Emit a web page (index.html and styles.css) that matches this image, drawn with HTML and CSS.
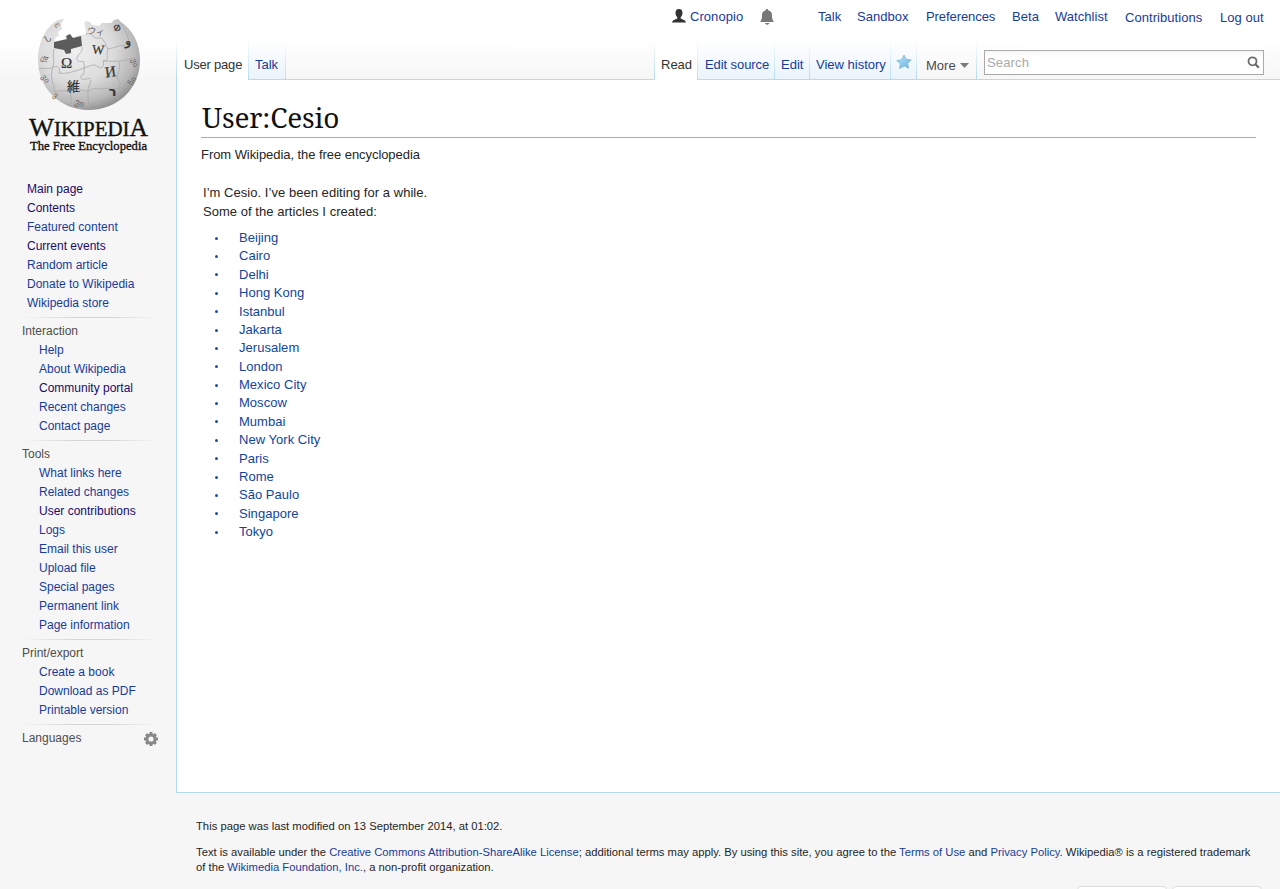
FILE: index.html
```html
<!DOCTYPE html>
<html lang="en">
<head>
<meta charset="utf-8">
<title>User:Cesio - Wikipedia, the free encyclopedia</title>
<link rel="stylesheet" href="styles.css">
</head>
<body>
<div class="page">
  <aside class="sidebar">
    <a class="logo">
      <svg width="176" height="170" viewBox="0 0 176 170">
        <defs>
          <radialGradient id="globe" cx="0.38" cy="0.34" r="0.72">
            <stop offset="0" stop-color="#f0f0f0"/>
            <stop offset="0.5" stop-color="#dcdcdc"/>
            <stop offset="0.8" stop-color="#b8b8b8"/>
            <stop offset="1" stop-color="#858585"/>
          </radialGradient>
        </defs>
        <path fill="url(#globe)" d="M64 19 L61 24 L62 29 L58 32 L59 36 L56 37 L54 42 L66 40 L65 37 L69 34 L71 38 L81 35 L86 34 L85 25 L84 24 L86 21 L90 22 L92 25 L99 26 L102 23 L111 23 L114 20 L118 19 L121 22 C133 30 140 44 140 60 C140 89 117 110 89 110 C60 110 38 88 38 60 C38 40 47 26 58 20 Z"/>
        <path fill="#5c5c5c" d="M54 42 L67 39 L66 36 L70 34 L73 38 L81 36 L82 46 L71 49 L71 53 L66 54 L64 50 L54 48 Z"/>
        <g class="seams">
          <path d="M82 47 C83 52 79 53 78 56 C75 59 78 63 83 61 C85 64 84 69 84 74 C79 75 80 81 86 79 C91 77 92 80 89 86 C87 91 88 98 89 109"/>
          <path d="M54 49 C52 56 55 61 53 67 C58 65 61 69 59 73 C64 74 71 73 84 68 C91 66 94 63 98 67 C102 70 105 65 103 61 C112 61 120 63 137 57"/>
          <path d="M39 69 C47 67 49 70 53 67 M53 67 C49 78 54 84 55 92 C61 89 67 93 72 89 C80 88 84 93 91 90 C97 86 100 91 106 88 C116 91 122 87 132 83"/>
          <path d="M86 34 C94 32 93 40 98 38 C104 36 105 45 108 49 C105 56 111 60 103 61 M108 49 C116 48 121 43 127 47 C131 44 128 34 121 23 M119 62 C122 71 114 75 119 81 C123 84 116 89 118 99 M72 89 C69 94 73 99 70 106"/>
        </g>
        <g class="runes">
          <text x="61" y="68" font-size="15" class="dark">Ω</text>
          <text x="92" y="54" font-size="13" class="dark" transform="rotate(4 98 50)">W</text>
          <text x="105" y="77" font-size="15" class="dark" transform="rotate(-8 109 71)">И</text>
          <text x="67" y="91" font-size="13" class="cjk dark">維</text>
          <text x="109" y="96" font-size="12" class="hebrew dark">ר</text>
          <text x="87" y="34" font-size="9" class="cjk" transform="rotate(8 92 31)">ウィ</text>
          <text x="45" y="42" font-size="9" transform="rotate(-25 48 40)">Ն</text>
          <text x="125" y="45" font-size="13" class="dark">و</text>
          <text x="40" y="62" font-size="8" transform="rotate(-80 44 58)">वि</text>
          <text x="41" y="81" font-size="8" transform="rotate(55 45 79)">ვი</text>
          <text x="53" y="99" font-size="8" transform="rotate(35 57 97)">ვ</text>
          <text x="75" y="106" font-size="9" transform="rotate(20 80 103)">ვი</text>
          <text x="131" y="64" font-size="8" transform="rotate(75 134 62)">ვი</text>
          <text x="128" y="84" font-size="8" transform="rotate(-60 132 81)">ჩი</text>
          <text x="114" y="31" font-size="10" class="dark" transform="rotate(35 117 27)">Φ</text>
          <text x="54" y="28" font-size="7" transform="rotate(-35 56 25)">ო</text>
        </g>
        <g class="wordmark">
          <text x="29" y="136" font-size="20.500" textLength="119" lengthAdjust="spacingAndGlyphs"><tspan font-size="26">W</tspan>IKIPEDI<tspan font-size="25">A</tspan></text>
          <text x="30" y="150" font-size="13" textLength="117" lengthAdjust="spacingAndGlyphs">The Free Encyclopedia</text>
        </g>
      </svg>
    </a>
    <nav class="portal portal-first">
      <ul>
        <li><a class="visited">Main page</a></li>
        <li><a class="visited">Contents</a></li>
        <li><a>Featured content</a></li>
        <li><a class="visited">Current events</a></li>
        <li><a>Random article</a></li>
        <li><a>Donate to Wikipedia</a></li>
        <li><a>Wikipedia store</a></li>
      </ul>
    </nav>
    <nav class="portal">
      <h3>Interaction</h3>
      <ul>
        <li><a>Help</a></li>
        <li><a>About Wikipedia</a></li>
        <li><a class="visited">Community portal</a></li>
        <li><a>Recent changes</a></li>
        <li><a>Contact page</a></li>
      </ul>
    </nav>
    <nav class="portal">
      <h3>Tools</h3>
      <ul>
        <li><a>What links here</a></li>
        <li><a>Related changes</a></li>
        <li><a class="visited">User contributions</a></li>
        <li><a>Logs</a></li>
        <li><a>Email this user</a></li>
        <li><a>Upload file</a></li>
        <li><a>Special pages</a></li>
        <li><a>Permanent link</a></li>
        <li><a>Page information</a></li>
      </ul>
    </nav>
    <nav class="portal">
      <h3>Print/export</h3>
      <ul>
        <li><a>Create a book</a></li>
        <li><a>Download as PDF</a></li>
        <li><a>Printable version</a></li>
      </ul>
    </nav>
    <nav class="portal languages">
      <h3>Languages</h3>
      <svg class="gear" width="14" height="14" viewBox="0 0 14 14">
        <circle cx="7" cy="7" r="4.100" fill="none" stroke="#888" stroke-width="3"/>
        <path stroke="#888" stroke-width="3" d="M7 0V2.500M7 11.500V14M0 7H2.500M11.500 7H14M2.100 2.100L3.800 3.800M10.200 10.200L11.900 11.900M2.100 11.900L3.800 10.200M10.200 3.800L11.900 2.100"/>
      </svg>
    </nav>
  </aside>

  <div class="column">
    <header class="head">
      <nav class="personal">
        <svg class="user-icon" width="14" height="14" viewBox="0 0 14 14"><path fill="#333" d="M7 0C9.300 0 10.600 1.600 10.500 4C10.400 6.100 9.600 7.400 8.700 8.200V9.400C10.300 10.500 13.700 10.600 14 13.500H0C.3 10.600 3.700 10.500 5.300 9.400V8.200C4.400 7.400 3.600 6.100 3.500 4C3.400 1.600 4.700 0 7 0Z"/></svg>
        <a class="name">Cronopio</a>
        <svg class="bell" width="14" height="16" viewBox="0 0 14 16"><path fill="#777" d="M7 0C7.800 0 8.200.5 8.200 1.200C10.900 1.800 12 3.600 12 6C12 9.500 12.300 10.800 13.500 12V13H.5V12C1.700 10.800 2 9.500 2 6C2 3.600 3.100 1.800 5.800 1.200C5.800.5 6.200 0 7 0ZM5 14H9.500C9 15.200 8.200 15.700 7.200 15.700S5.300 15.200 5 14Z"/></svg>
        <a class="p-talk">Talk</a>
        <a class="p-sandbox">Sandbox</a>
        <a class="p-prefs">Preferences</a>
        <a class="p-beta">Beta</a>
        <a class="p-watch">Watchlist</a>
        <a class="p-contribs low">Contributions</a>
        <a class="p-logout low">Log out</a>
      </nav>
      <div class="tabs">
        <span class="tab selected t-user"><a>User page</a></span>
        <span class="tab t-talk"><a>Talk</a></span>
        <span class="spacer"></span>
        <span class="tab selected t-read"><a>Read</a></span>
        <span class="tab t-source"><a>Edit source</a></span>
        <span class="tab t-edit"><a>Edit</a></span>
        <span class="tab t-history"><a>View history</a></span>
        <span class="tab t-star"><svg width="16" height="16" viewBox="0 0 16 16">
          <defs><linearGradient id="star" x1="0" y1="0" x2="1" y2="1"><stop offset="0" stop-color="#c2e4fa"/><stop offset="1" stop-color="#60b3e8"/></linearGradient></defs>
          <path fill="url(#star)" stroke="#7cb5d1" stroke-width=".8" d="M8.100 1.100L10 5.300L15.200 5.900L11.600 9.500L12.700 14.200L8.300 12L3.600 14.600L4.400 9.700L.7 6.600L5.600 5.700Z"/></svg></span>
        <span class="tab t-more"><a>More</a><svg width="9" height="5" viewBox="0 0 9 5"><path fill="#797979" d="M0 0H9L4.500 5Z"/></svg></span>
        <label class="search"><span>Search</span><svg width="13" height="13" viewBox="0 0 13 13"><circle cx="5.500" cy="5.300" r="4" fill="none" stroke="#6c6c6c" stroke-width="1.800"/><path stroke="#6c6c6c" stroke-width="2.200" d="M8.200 8L11.800 11.800"/></svg></label>
      </div>
    </header>
    <main class="content">
      <h1>User:Cesio</h1>
      <p class="tagline">From Wikipedia, the free encyclopedia</p>
      <div class="bio">
        <p>I’m Cesio. I’ve been editing for a while.</p>
        <p>Some of the articles I created:</p>
      </div>
      <ul class="articles">
        <li><a>Beijing</a></li>
        <li><a>Cairo</a></li>
        <li><a>Delhi</a></li>
        <li><a>Hong Kong</a></li>
        <li><a>Istanbul</a></li>
        <li><a>Jakarta</a></li>
        <li><a>Jerusalem</a></li>
        <li><a>London</a></li>
        <li><a>Mexico City</a></li>
        <li><a>Moscow</a></li>
        <li><a>Mumbai</a></li>
        <li><a>New York City</a></li>
        <li><a>Paris</a></li>
        <li><a>Rome</a></li>
        <li><a>São Paulo</a></li>
        <li><a>Singapore</a></li>
        <li><a>Tokyo</a></li>
      </ul>
    </main>
    <footer class="footer">
      <p class="modified">This page was last modified on 13 September 2014, at 01:02.</p>
      <p class="license">Text is available under the <a>Creative Commons Attribution-ShareAlike License</a>; additional terms may apply. By using this site, you agree to the <a>Terms of Use</a> and <a>Privacy Policy</a>. Wikipedia® is a registered trademark<br>of the <a>Wikimedia Foundation, Inc.</a>, a non-profit organization.</p>
      <div class="badges"><span class="badge"></span><span class="badge"></span></div>
    </footer>
  </div>
</div>
</body>
</html>
```
FILE: styles.css
```css
* { box-sizing: border-box; }
body, h1, h3, p, ul { margin: 0; padding: 0; }
body {
  background: #f6f6f6;
  color: #252525;
  font-family: "Liberation Sans", Arial, sans-serif;
  font-size: 13px;
}
ul { list-style: none; }
a { color: #173b9b; }
svg { display: block; flex: none; }

.page { display: flex; width: 1280px; height: 889px; overflow: hidden; }
.sidebar { width: 176px; flex: none; background: linear-gradient(#fff 40px, #f6f6f6 80px); }
.column { display: flex; flex-direction: column; width: 1104px; }

.logo { display: block; height: 170px; }
.seams path { fill: none; stroke: #aaa; stroke-width: .8; }
.runes text { fill: #666; font-family: "Liberation Serif", "DejaVu Sans", serif; }
.runes .dark { fill: #333; stroke: #333; stroke-width: .2; }
.runes .cjk { font-family: "Noto Sans CJK JP", sans-serif; }
.runes .hebrew { font-family: "DejaVu Sans", sans-serif; font-weight: 700; }
.wordmark text { fill: #111; font-family: "Liberation Serif", serif; stroke: #111; stroke-width: .35; }

.portal { padding: 5px 0 4px 22px; font-size: 12px; line-height: 19px; background: linear-gradient(to right, rgba(200,200,200,0) 22px, #d4d4d4 75px, #d4d4d4 110px, rgba(200,200,200,0) 158px) top / 100% 1px no-repeat; }
.portal h3 { font-size: 12px; font-weight: 400; color: #4d4d4d; line-height: 19px; }
.portal ul { padding-left: 17px; }
.portal-first { background: none; padding: 10px 0 4px 27px; }
.portal-first ul { padding-left: 0; }
.portal a.visited { color: #1a0a6b; }
.languages { display: flex; }
.languages h3 { width: 122px; }
.gear { margin-top: 3px; }

.head { flex: none; height: 80px; background: linear-gradient(#fff 40px, #f6f6f6 80px); display: flex; flex-direction: column; }
.personal { display: flex; height: 40px; padding-left: 496px; line-height: 16px; padding-top: 9px; white-space: nowrap; }
.personal a { flex: none; letter-spacing: .05px; }
.name { width: 70px; margin-left: 4px; }
.p-talk { width: 39px; margin-left: 44px; }
.p-sandbox { width: 69px; }
.personal .p-prefs { width: 86px; letter-spacing: -.08px; }
.p-beta { width: 43px; }
.p-watch { width: 70px; }
.p-contribs { width: 95px; }
.low { padding-top: 1px; }

.tabs { display: flex; height: 40px; box-shadow: inset 0 -1px #b3dbf2; white-space: nowrap; }
.tab { display: flex; padding: 17px 0 0 6px; line-height: 16px; background: linear-gradient(#fff, #b3dbf2) right top / 1px 100% no-repeat, linear-gradient(#fff, #eaf4fb) top / 100% 39px no-repeat; }
.tab.selected { background: linear-gradient(#fff, #b3dbf2) right top / 1px 100% no-repeat, #fff; }
.selected a { color: #333; }
.t-user { width: 73px; padding-left: 8px; letter-spacing: -.2px; }
.t-user.selected { background: linear-gradient(#fff, #b3dbf2) right top / 1px 100% no-repeat, linear-gradient(#fff, #b3dbf2) left top / 1px 100% no-repeat, #fff; }
.t-talk { width: 37px; }
.spacer { width: 369px; background: linear-gradient(#fff, #b3dbf2) right top / 1px 100% no-repeat; }
.t-read { width: 43px; }
.t-source { width: 77px; padding-left: 7px; letter-spacing: -.08px; }
.t-edit { width: 35px; }
.t-history { width: 81px; }
.t-star { width: 26px; padding: 14px 0 0 5px; }
.t-more { width: 60px; padding-left: 9px; padding-top: 18px; background: linear-gradient(#fff, #b3dbf2) right top / 1px 100% no-repeat; }
.t-more a { color: #4d4d4d; }
.t-more svg { margin: 5px 0 0 4px; }
.search { display: flex; justify-content: space-between; width: 280px; height: 25px; margin: 10px 0 0 7px; padding: 5px 3px 0 2px; border: 1px solid #aaa; background: linear-gradient(#f6f6f6, #fff 30%); color: #aaa; line-height: 14px; letter-spacing: .15px; }

.content { flex: none; height: 713px; background: #fff; border-left: 1px solid #b3d9ee; border-bottom: 1px solid #b3d9ee; padding: 20px 24px 0; }
h1 { height: 38px; padding-left: 1px; border-bottom: 1px solid #aaa; font: 400 28px/34px "Noto Serif", "Liberation Serif", serif; letter-spacing: -.15px; color: #111; }
.tagline { margin-top: 8px; line-height: 18px; letter-spacing: -.06px; }
.bio { margin: 19px 0 0 2px; line-height: 19px; letter-spacing: .04px; }
.articles { margin-top: 8px; }
.articles li { display: flex; align-items: center; padding-left: 14px; height: 18.375px; line-height: 18.375px; }
.articles li::before { content: ""; width: 3px; height: 3px; margin-right: 21px; border-radius: 50%; background: #1d4fa5; }
.articles a { color: #0f459f; letter-spacing: .03px; }

.footer { padding: 26px 0 0 20px; font-size: 11.25px; line-height: 15px; white-space: nowrap; }
.license { margin-top: 11px; }
.badges { display: flex; gap: 5px; padding: 11px 0 0 881px; }
.badge { flex: none; width: 90px; height: 31px; border: 1px solid #ddd; border-radius: 4px; background: #fff; }
```
